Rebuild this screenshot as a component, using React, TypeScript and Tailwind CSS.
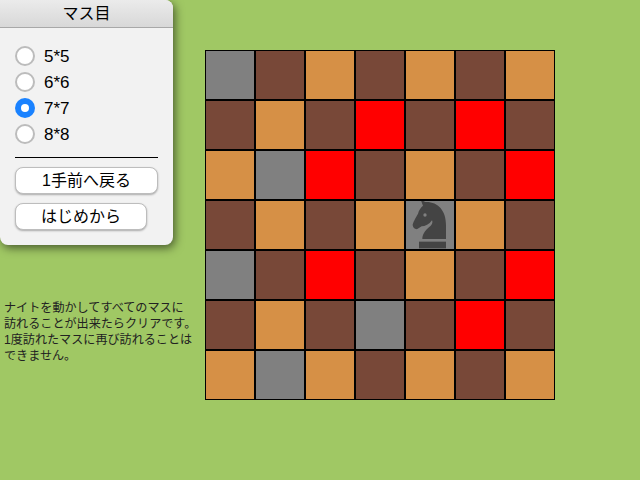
import React from "react";

const B = "bg-[#784838]";
const O = "bg-[#d69046]";
const G = "bg-[#808080]";
const R = "bg-[#ff0000]";
const K = "knight";
const rows = [
  [G, B, O, B, O, B, O],
  [B, O, B, R, B, R, B],
  [O, G, R, B, O, B, R],
  [B, O, B, O, K, O, B],
  [G, B, R, B, O, B, R],
  [B, O, B, G, B, R, B],
  [O, G, O, B, O, B, O],
];

const font = "font-['Liberation_Sans','Noto_Sans_CJK_JP',sans-serif]";

function Radio({ label, checked }: { label: string; checked?: boolean }) {
  return (
    <div className="flex h-[26px] items-center gap-[9px]">
      {checked ? (
        <span className="flex h-5 w-5 items-center justify-center rounded-full bg-[#1a82ff]">
          <span className="h-2 w-2 rounded-full bg-white" />
        </span>
      ) : (
        <span className="h-5 w-5 rounded-full border-2 border-[#bcbcbc] bg-white" />
      )}
      <span className="text-[17px] leading-none text-black">{label}</span>
    </div>
  );
}

function Btn({ label, w }: { label: string; w: string }) {
  return (
    <button className={`h-[27px] ${w} rounded-[8px] border border-[#bdbdbd] bg-white text-center text-[16px] leading-none text-black shadow-[0_1px_2px_rgba(0,0,0,0.3)]`}>
      {label}
    </button>
  );
}

function Knight() {
  return (
    <svg viewBox="18 18 144 144" className="h-12 w-12" fill="#444444">
      <path d="M67 132 C67 120 72 108 92 92 C98 86 98 80 96 76 C88 88 75 94 65 94 L52 102 C46 104 38 98 38 90 C38 84 46 70 54 56 C56 45 64 36 69 32 L62 14 L76 21 C112 19 138 45 138 90 L138 132 Z" />
      <circle cx="75" cy="60" r="5" fill="#808080" />
      <rect x="57" y="140" width="81" height="20" />
    </svg>
  );
}

export default function App() {
  return (
    <div className={`flex h-[480px] w-[640px] overflow-hidden bg-[#a0c864] ${font}`}>
      <div className="flex w-[205px] shrink-0 flex-col">
        <div className="h-[245px] w-[173px] rounded-b-[8px] rounded-tr-[8px] bg-[#f2f2f2] shadow-[2px_3px_10px_rgba(0,0,0,0.55)]">
          <div className="flex h-[28px] items-center justify-center rounded-tr-[8px] border-b border-[#a8a8a8] bg-gradient-to-b from-[#ebebeb] to-[#d8d8d8] text-[16px] text-black">
            マス目
          </div>
          <div className="flex flex-col px-[15px] pt-[15px]">
            <Radio label="5*5" />
            <Radio label="6*6" />
            <Radio label="7*7" checked />
            <Radio label="8*8" />
            <div className="mt-[10px] h-px w-[143px] bg-black" />
            <div className="mt-[9px] flex flex-col items-start gap-[9px]">
              <Btn label="1手前へ戻る" w="w-[143px]" />
              <Btn label="はじめから" w="w-[132px]" />
            </div>
          </div>
        </div>
        <p className="mt-[55px] w-[200px] whitespace-nowrap pl-[4px] text-[12.1px] leading-[16px] text-[#222]">
          ナイトを動かしてすべてのマスに
          <br />
          訪れることが出来たらクリアです。
          <br />
          1度訪れたマスに再び訪れることは
          <br />
          できません。
        </p>
      </div>
      <div className="mt-[50px] grid h-[350px] w-[350px] grid-cols-7 grid-rows-7">
        {rows.flat().map((c, i) => (
          <div
            key={i}
            className={`flex h-[50px] w-[50px] items-center justify-center border border-black ${c === K ? G : c}`}
          >
            {c === K && <Knight />}
          </div>
        ))}
      </div>
    </div>
  );
}
